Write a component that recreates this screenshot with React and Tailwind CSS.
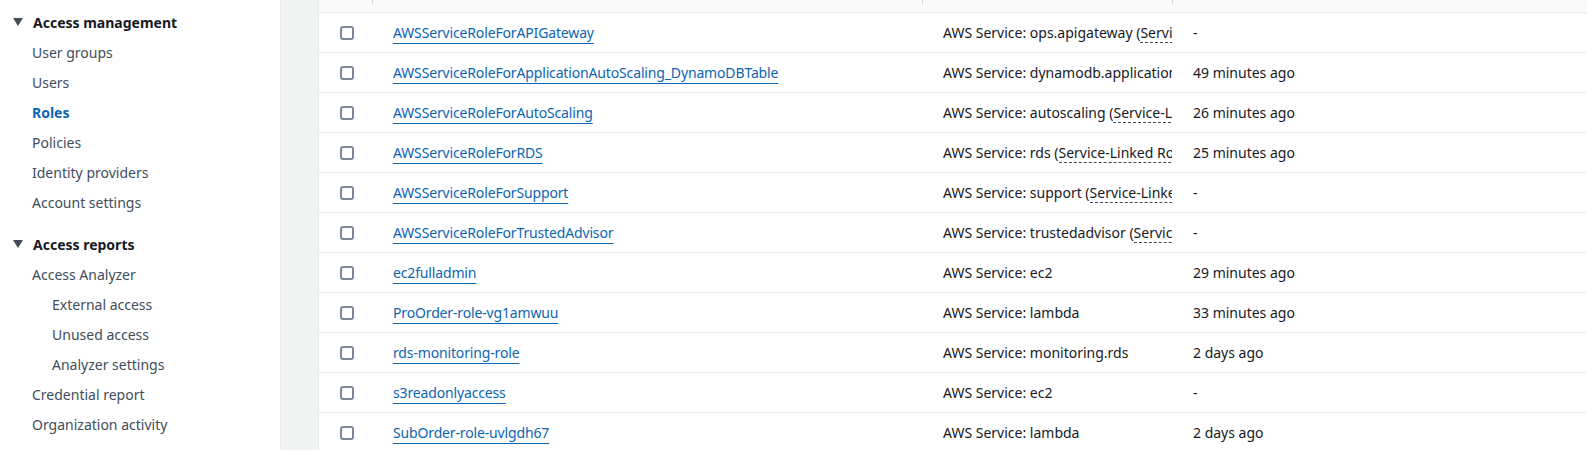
const groups = [
  {
    title: "Access management",
    items: [
      { label: "User groups" },
      { label: "Users" },
      { label: "Roles", active: true },
      { label: "Policies" },
      { label: "Identity providers" },
      { label: "Account settings" },
    ],
  },
  {
    title: "Access reports",
    items: [
      { label: "Access Analyzer" },
      { label: "External access", sub: true },
      { label: "Unused access", sub: true },
      { label: "Analyzer settings", sub: true },
      { label: "Credential report" },
      { label: "Organization activity" },
    ],
  },
];

const roles = [
  { name: "AWSServiceRoleForAPIGateway", svc: "ops.apigateway", slr: true, last: "-" },
  { name: "AWSServiceRoleForApplicationAutoScaling_DynamoDBTable", svc: "dynamodb.application-autoscaling", slr: true, last: "49 minutes ago" },
  { name: "AWSServiceRoleForAutoScaling", svc: "autoscaling", slr: true, last: "26 minutes ago" },
  { name: "AWSServiceRoleForRDS", svc: "rds", slr: true, last: "25 minutes ago" },
  { name: "AWSServiceRoleForSupport", svc: "support", slr: true, last: "-" },
  { name: "AWSServiceRoleForTrustedAdvisor", svc: "trustedadvisor", slr: true, last: "-" },
  { name: "ec2fulladmin", svc: "ec2", last: "29 minutes ago" },
  { name: "ProOrder-role-vg1amwuu", svc: "lambda", last: "33 minutes ago" },
  { name: "rds-monitoring-role", svc: "monitoring.rds", last: "2 days ago" },
  { name: "s3readonlyaccess", svc: "ec2", last: "-" },
  { name: "SubOrder-role-uvlgdh67", svc: "lambda", last: "2 days ago" },
];

function Caret() {
  return (
    <svg width="10" height="8" viewBox="0 0 10 8" className="shrink-0">
      <path d="M0 0 L10 0 L5 8 Z" fill="#414d5c" />
    </svg>
  );
}

export default function App() {
  return (
    <div
      className="flex h-[450px] w-[1587px] overflow-hidden bg-white text-[14px] text-[#414d5c]"
      style={{ fontFamily: '"Noto Sans", "Open Sans", Arial, sans-serif' }}
    >
      {/* Side navigation */}
      <nav className="w-[281px] shrink-0 border-r border-[#e9ebed] pt-[7px]">
        {groups.map((g, gi) => (
          <div key={g.title} className={gi > 0 ? "mt-[12px]" : ""}>
            <div className="flex h-[30px] items-center gap-[10px] pl-[13px]">
              <Caret />
              <span className="font-bold text-[#16191f]">{g.title}</span>
            </div>
            {g.items.map((it) => (
              <div
                key={it.label}
                className={`flex h-[30px] items-center ${it.sub ? "pl-[52px]" : "pl-[32px]"} ${
                  it.active ? "font-bold text-[#0b65b2]" : ""
                }`}
              >
                {it.label}
              </div>
            ))}
          </div>
        ))}
      </nav>

      {/* Gutter */}
      <div className="w-[38px] shrink-0 border-r border-[#e9ebed] bg-[#f2f3f3]" />

      {/* Table */}
      <div className="flex-1 min-w-0">
        <div className="flex h-[13px] border-b border-[#e9ebed] bg-[#fafafa]">
          <div className="w-[53px] shrink-0" />
          <div className="h-[4px] w-[550px] shrink-0 border-l border-[#d1d5db]" />
          <div className="h-[4px] w-[250px] shrink-0 border-l border-[#d1d5db]" />
          <div className="h-[4px] flex-1 border-l border-[#d1d5db]" />
        </div>
        {roles.map((r) => (
          <div key={r.name} className="flex h-[40px] items-center border-b border-[#e9ebed]">
            <div className="flex w-[53px] shrink-0 justify-center pl-[2px]">
              <span className="block h-[14px] w-[14px] rounded-[3px] border-2 border-[#7d8998] bg-white" />
            </div>
            <div className="w-[550px] shrink-0 pl-[21px]">
              <a className="tracking-[-0.15px] text-[#0b65b2] underline decoration-1 underline-offset-[5px]">{r.name}</a>
            </div>
            <div className="w-[250px] shrink-0 overflow-hidden whitespace-nowrap pl-[21px] text-[#16191f]">
              AWS Service: {r.svc}
              {r.slr && (
                <>
                  {" "}
                  <span>(</span>
                  <span className="border-b border-dashed border-[#414d5c]">Service-Linked Role</span>
                  <span>)</span>
                </>
              )}
            </div>
            <div className="flex-1 whitespace-nowrap pl-[21px] text-[#16191f]">{r.last}</div>
          </div>
        ))}
      </div>
    </div>
  );
}
